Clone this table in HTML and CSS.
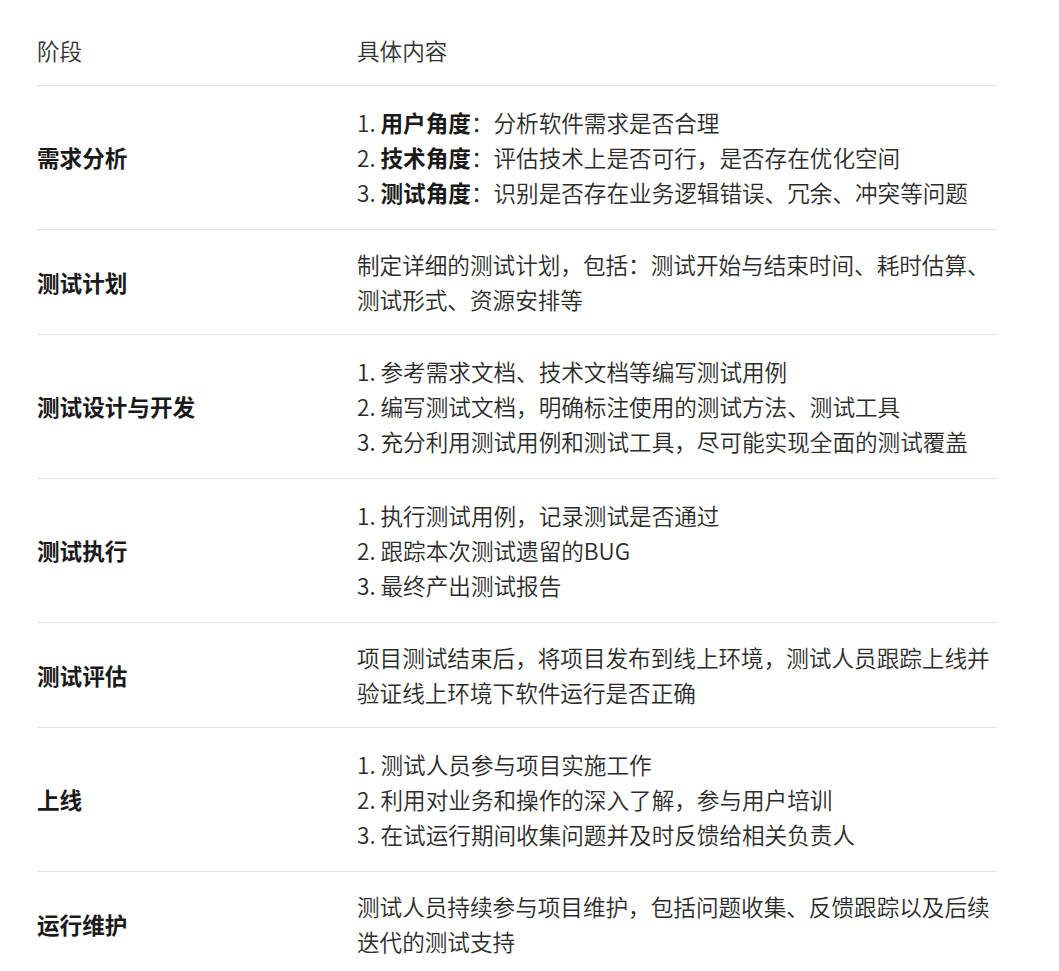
FILE: index.html
```html
<!DOCTYPE html>
<html lang="zh-CN">
<head>
<meta charset="utf-8">
<title>测试阶段</title>
<link rel="stylesheet" href="styles.css">
</head>
<body>
<table class="stages">
  <colgroup><col class="col-stage"><col class="col-detail"></colgroup>
  <thead>
    <tr><th>阶段</th><th>具体内容</th></tr>
  </thead>
  <tbody>
    <tr>
      <td class="stage">需求分析</td>
      <td><ol class="items">
        <li>1. <b>用户角度</b>：分析软件需求是否合理</li>
        <li>2. <b>技术角度</b>：评估技术上是否可行，是否存在优化空间</li>
        <li>3. <b>测试角度</b>：识别是否存在业务逻辑错误、冗余、冲突等问题</li>
      </ol></td>
    </tr>
    <tr>
      <td class="stage">测试计划</td>
      <td><p class="para">制定详细的测试计划，包括：测试开始与结束时间、耗时估算、测试形式、资源安排等</p></td>
    </tr>
    <tr>
      <td class="stage">测试设计与开发</td>
      <td><ol class="items">
        <li>1. 参考需求文档、技术文档等编写测试用例</li>
        <li>2. 编写测试文档，明确标注使用的测试方法、测试工具</li>
        <li>3. 充分利用测试用例和测试工具，尽可能实现全面的测试覆盖</li>
      </ol></td>
    </tr>
    <tr>
      <td class="stage">测试执行</td>
      <td><ol class="items">
        <li>1. 执行测试用例，记录测试是否通过</li>
        <li>2. 跟踪本次测试遗留的BUG</li>
        <li>3. 最终产出测试报告</li>
      </ol></td>
    </tr>
    <tr>
      <td class="stage">测试评估</td>
      <td><p class="para">项目测试结束后，将项目发布到线上环境，测试人员跟踪上线并验证线上环境下软件运行是否正确</p></td>
    </tr>
    <tr>
      <td class="stage">上线</td>
      <td><ol class="items">
        <li>1. 测试人员参与项目实施工作</li>
        <li>2. 利用对业务和操作的深入了解，参与用户培训</li>
        <li>3. 在试运行期间收集问题并及时反馈给相关负责人</li>
      </ol></td>
    </tr>
    <tr>
      <td class="stage">运行维护</td>
      <td><p class="para">测试人员持续参与项目维护，包括问题收集、反馈跟踪以及后续迭代的测试支持</p></td>
    </tr>
  </tbody>
</table>
</body>
</html>
```

FILE: styles.css
```css
html, body {
  margin: 0;
  padding: 0;
  background: #ffffff;
}

body {
  font-family: "Noto Sans CJK SC", "Noto Sans", sans-serif;
  font-size: 22.6px;
  font-weight: 350;
  line-height: 35px;
  color: #2b2b2b;
  padding: 33px 0 0 37px;
}

.stages {
  border-collapse: collapse;
  width: 960px;
  table-layout: fixed;
}

.col-stage { width: 320px; }
.col-detail { width: 640px; }

.stages th {
  text-align: left;
  font-weight: 350;
  color: #333333;
  padding: 0 0 17px 0;
  border-bottom: 1px solid #e3e3e3;
  vertical-align: middle;
}

.stages td {
  padding: 17px 0;
  border-bottom: 1px solid #e3e3e3;
  vertical-align: middle;
}

.stages tbody tr:last-child td {
  border-bottom: none;
}

.stage {
  font-weight: 700;
  color: #1a1a1a;
}

.items {
  list-style: none;
  margin: 0;
  padding: 2px 0 2px 0;
}

.items b {
  font-weight: 700;
  color: #1a1a1a;
}

.para {
  margin: 0;
}
```
